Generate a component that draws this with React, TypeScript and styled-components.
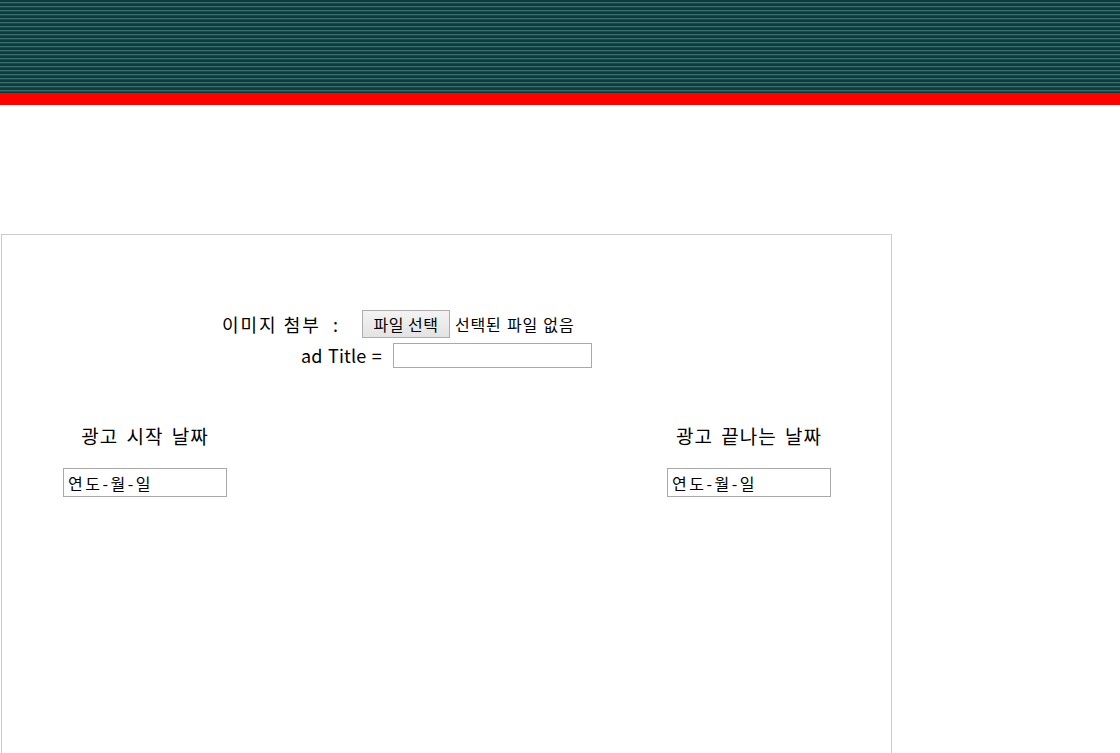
import React from "react";
import styled, { createGlobalStyle } from "styled-components";

const Global = createGlobalStyle`
  html, body { margin: 0; padding: 0; background: #fff; }
  body { font-family: "Noto Sans CJK KR", "Noto Sans", sans-serif; color: #000; }
`;

const Header = styled.header`
  height: 93px;
  background: repeating-linear-gradient(
    to bottom,
    #0f3a3b 0px,
    #0f3a3b 2px,
    #3a6f70 2px,
    #3a6f70 3px,
    #1b4b4c 3px,
    #1b4b4c 4px
  );
`;

const RedBar = styled.div`
  height: 12px;
  background: #ff0000;
`;

const Panel = styled.section`
  margin: 129px 0 0 1px;
  width: 891px;
  height: 600px;
  border: 1px solid #cccccc;
  border-bottom: none;
  padding-top: 75px;
  box-sizing: border-box;
`;

const Row = styled.div<{ $indent: number; $top: number }>`
  display: flex;
  align-items: center;
  padding-left: ${(p) => p.$indent}px;
  margin-top: ${(p) => p.$top}px;
  height: 28px;
`;

const Label = styled.span<{ $size: number; $width: number; $tracking: number; $words: number }>`
  font-size: ${(p) => p.$size}px;
  width: ${(p) => p.$width}px;
  letter-spacing: ${(p) => p.$tracking}px;
  word-spacing: ${(p) => p.$words}px;
  flex: none;
  white-space: pre;
`;

const FileButton = styled.button`
  height: 28px;
  width: 88px;
  padding: 0;
  font-family: inherit;
  font-size: 16px;
  letter-spacing: 0.5px;
  color: #000;
  border: 1px solid #adadad;
  border-radius: 0;
  background: linear-gradient(#f3f3f3, #e3e3e3);
`;

const FileStatus = styled.span`
  font-size: 16px;
  letter-spacing: 0.8px;
  word-spacing: 1px;
  margin-left: 5px;
`;

const TitleInput = styled.input`
  width: 199px;
  height: 25px;
  box-sizing: border-box;
  border: 1px solid #a9a9a9;
  padding: 0 4px;
  font-size: 15px;
  margin: 0;
`;

const DateArea = styled.div`
  display: flex;
  justify-content: space-between;
  padding: 54px 60px 0 61px;
`;

const DateColumn = styled.div`
  display: flex;
  flex-direction: column;
  align-items: center;
  gap: 19px;
`;

const DateLabel = styled.div`
  font-size: 19px;
  line-height: 26px;
  letter-spacing: 1px;
  word-spacing: 3px;
`;

const DateBox = styled.div`
  width: 164px;
  height: 29px;
  box-sizing: border-box;
  border: 1px solid #a9a9a9;
  padding: 0 0 0 4px;
  font-size: 16px;
  letter-spacing: 2.5px;
  display: flex;
  align-items: center;
`;

export default function App() {
  return (
    <>
      <Global />
      <Header />
      <RedBar />
      <Panel>
        <Row $indent={220} $top={0}>
          <Label $size={18} $width={140} $tracking={2} $words={0}>이미지 첨부  :</Label>
          <FileButton type="button">파일 선택</FileButton>
          <FileStatus>선택된 파일 없음</FileStatus>
        </Row>
        <Row $indent={299} $top={3}>
          <Label $size={18} $width={92} $tracking={0.2} $words={1}>ad Title =</Label>
          <TitleInput type="text" />
        </Row>
        <DateArea>
          <DateColumn>
            <DateLabel>광고 시작 날짜</DateLabel>
            <DateBox>연도-월-일</DateBox>
          </DateColumn>
          <DateColumn>
            <DateLabel>광고 끝나는 날짜</DateLabel>
            <DateBox>연도-월-일</DateBox>
          </DateColumn>
        </DateArea>
      </Panel>
    </>
  );
}
